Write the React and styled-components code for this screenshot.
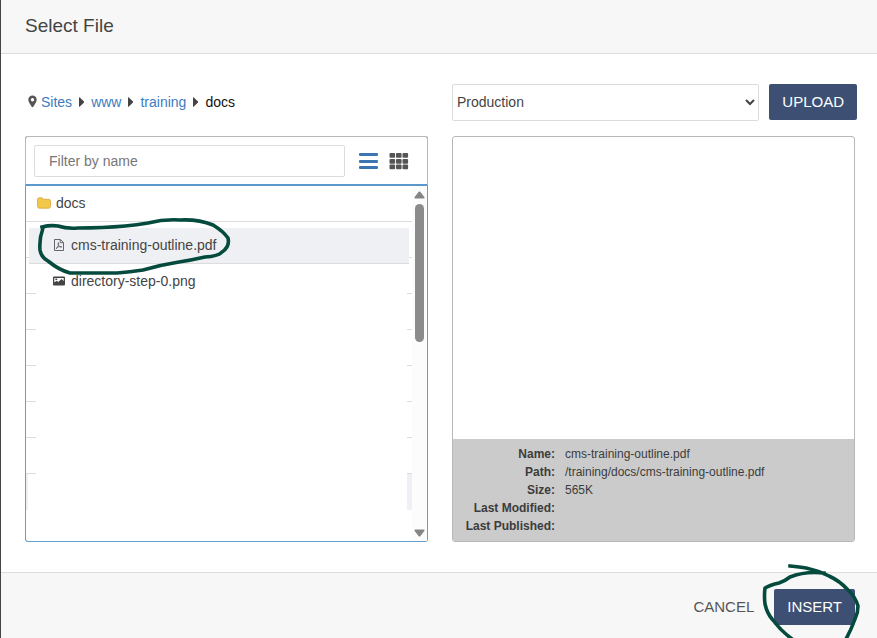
import React, { useState } from 'react';
import styled, { createGlobalStyle } from 'styled-components';

const GlobalStyle = createGlobalStyle`
  * {
    box-sizing: border-box;
  }
  body {
    margin: 0;
    background: #fff;
    color: #444;
    font-family: "Liberation Sans", Arial, sans-serif;
    font-size: 14px;
  }
  button, input, select {
    font-family: inherit;
  }
`;

const DialogStyled = styled.div`
  display: flex;
  flex-direction: column;
  min-height: 100vh;
  border-left: 1px solid #444;
`;

const HeaderStyled = styled.header`
  padding: 14px 24px 15px;
  background: #f7f7f7;
  border-bottom: 1px solid #dcdcdc;
`;

const TitleStyled = styled.h1`
  margin: 0;
  font-size: 19px;
  font-weight: normal;
  line-height: 24px;
`;

const ContentStyled = styled.main`
  flex: 1;
  display: grid;
  grid-template-columns: 1fr 1fr;
  grid-template-rows: auto 1fr;
  gap: 15px 24px;
  padding: 30px 22px 30px 24px;
`;

const BreadcrumbStyled = styled.nav`
  display: flex;
  align-items: center;
  gap: 7px;
  padding: 0 0 2px 3px;
  color: #111;
`;

const CrumbLink = styled.a`
  display: flex;
  align-items: center;
  gap: 4px;
  color: #3d7cc0;
  text-decoration: none;
`;

const ToolbarStyled = styled.div`
  display: flex;
  align-items: flex-start;
  gap: 10px;
  margin-right: -2px;
`;

const SelectStyled = styled.select`
  flex: 1;
  min-width: 0;
  height: 37px;
  padding: 0 0 2px;
  border: 1px solid #dcdcdc;
  border-radius: 2px;
  background: #fff;
  color: #444;
  font-size: 14px;
`;

const ButtonStyled = styled.button`
  height: 36px;
  padding: 0 ${(props) => (props.$primary ? '13px' : '0')} 2px;
  border: 0;
  border-radius: 2px;
  background: ${(props) => (props.$primary ? '#3d4f73' : 'transparent')};
  color: ${(props) => (props.$primary ? '#fff' : '#555')};
  font-size: 15px;
  cursor: pointer;
`;

const BrowserStyled = styled.section`
  display: flex;
  flex-direction: column;
  border: 1px solid #659dcb;
  border-top: 0;
  border-radius: 3px;
`;

const FilterBarStyled = styled.div`
  display: flex;
  align-items: center;
  gap: 10px;
  margin: 0 -1px;
  padding: 8px 18px 7px 8px;
  border: 1px solid #b8b8b8;
  border-bottom: 2px solid #5b99cc;
  border-radius: 3px 3px 0 0;
`;

const FilterInput = styled.input`
  flex: 1;
  min-width: 0;
  height: 32px;
  margin-right: 4px;
  padding: 0 14px;
  border: 1px solid #dcdcdc;
  border-radius: 2px;
  color: #444;
  font-size: 14px;
  &::placeholder {
    color: #777;
  }
`;

const ViewButton = styled.button`
  display: flex;
  padding: 0 0 1px;
  border: 0;
  background: none;
  color: ${(props) => (props.$active ? '#3b76b3' : '#555')};
  cursor: pointer;
`;

const ListAreaStyled = styled.div`
  flex: 1;
  display: flex;
`;

const StackStyled = styled.div`
  flex: 1;
  display: grid;
  align-items: start;
`;

const RuledRows = styled.div`
  grid-area: 1 / 1;
`;

const RuledRow = styled.div`
  height: 36px;
  border-bottom: 1px solid ${(props) => (props.$last ? 'transparent' : '#dcdcdc')};
  background: ${(props) => (props.$last ? 'linear-gradient(to right, #eff0f5 2px, #fff 2px, #fff 50%, #eff0f5 50%)' : '#fff')};
`;

const TreeStyled = styled.div`
  grid-area: 1 / 1;
  align-self: stretch;
  display: flex;
  flex-direction: column;
`;

const FolderRow = styled.div`
  display: flex;
  align-items: center;
  gap: 5px;
  height: 36px;
  padding: 0 11px 2px;
`;

const FileListStyled = styled.ul`
  flex: 1;
  margin: 0 5px 0 10px;
  padding: 6px 0 0;
  list-style: none;
  background: #fff;
`;

const FileRow = styled.li`
  position: relative;
  height: 36px;
  margin: 0 -2px 0 -7px;
  border-bottom: 1px solid ${(props) => (props.$selected ? '#dcdcdc' : 'transparent')};
  background: ${(props) => (props.$selected ? '#eff0f4' : 'transparent')};
`;

const FileButton = styled.button`
  display: flex;
  align-items: center;
  gap: 6px;
  width: 100%;
  height: 35px;
  padding: 0 24px 2px;
  border: 0;
  background: none;
  color: #444;
  font-size: 14px;
`;

const ScrollbarStyled = styled.div`
  display: flex;
  flex-direction: column;
  align-items: center;
  width: 15px;
  padding: 5px 0 4px;
  background: #fcfcfc;
`;

const ScrollTrack = styled.div`
  flex: 1;
  width: 9px;
  padding: 5px 0;
`;

const ScrollThumb = styled.div`
  height: 43%;
  border-radius: 5px;
  background: #8b8b8b;
`;

const PreviewStyled = styled.section`
  display: flex;
  flex-direction: column;
  justify-content: flex-end;
  border: 1px solid #b8b8b8;
  border-radius: 3px;
`;

const DetailsStyled = styled.div`
  padding: 6px 0;
  background: #cbcbcb;
`;

const DetailsTable = styled.table`
  border-collapse: collapse;
  font-size: 12px;
  line-height: 18px;
  color: #3c3c3c;
  th {
    width: 102px;
    padding: 0;
    text-align: right;
  }
  td {
    padding: 0 10px;
  }
`;

const FooterStyled = styled.footer`
  display: flex;
  justify-content: flex-end;
  gap: 20px;
  padding: 16px 22px 13px;
  background: #f7f7f7;
  border-top: 1px solid #dcdcdc;
`;

const InsertWrapper = styled.div`
  position: relative;
`;

const InkStyled = styled.svg`
  position: absolute;
  z-index: 1;
  left: ${(props) => props.$left}px;
  top: ${(props) => props.$top}px;
  fill: none;
  stroke: #044b3d;
  stroke-width: 3.6;
  stroke-linecap: square;
  stroke-linejoin: round;
  pointer-events: none;
`;

const PinIcon = () => (
  <svg width='9' height='13' viewBox='0 0 9 13'>
    <path fill='#555' fillRule='evenodd' d='M4.5 0.5A4.2 4.2 0 0 0 .3 4.7C.3 7 2.6 9.5 3.5 11.5Q4.5 13 5.5 11.5C6.4 9.5 8.7 7 8.7 4.7A4.2 4.2 0 0 0 4.5.5ZM4.5 3a1.7 1.7 0 1 1 0 3.4a1.7 1.7 0 0 1 0-3.4Z' />
  </svg>
);

const CaretIcon = () => (
  <svg width='5' height='10' viewBox='0 0 5 10'>
    <path fill='#444' d='M0 .5Q0 0 .6.3L5 4.4V5.6L.6 9.7Q0 10 0 9.5Z' />
  </svg>
);

const FolderIcon = () => (
  <svg width='14' height='12' viewBox='0 0 14 12'>
    <path fill='#f2c84b' stroke='#d9a53a' strokeWidth='.8' d='M.5 2.6Q.5.8 2.2 .8H4.6Q6 .8 6.3 2.3H11.8Q13.5 2.3 13.5 4V9.3Q13.5 11.2 11.6 11.2H2.4Q.5 11.2.5 9.3Z' />
  </svg>
);

const PdfIcon = () => (
  <svg width='12' height='13' viewBox='0 0 12 13' fill='none' stroke='#666'>
    <path d='M1.5 1.5H7.5L10.5 4.5V12.5H1.5ZM7.2 1.5V4.7H10.5' />
    <path strokeWidth='.9' d='M5.3 4.6C4.4 6.5 6.2 9 8.8 9.2M5.4 4.6C6.5 6.4 4.4 9.6 3 11M3.2 10.2C4.5 8.9 6.6 8.4 8.8 8.6' />
  </svg>
);

const ImageIcon = () => (
  <svg width='12' height='10' viewBox='0 0 12 10'>
    <path fill='#444' fillRule='evenodd' d='M1 .5H11Q12 .5 12 1.5V8.5Q12 9.5 11 9.5H1Q0 9.5 0 8.5V1.5Q0 .5 1 .5ZM1.3 2V6.4L3.6 4.7L5.3 6L8.5 3L10.7 5V2ZM2.4 2.6H4.2V4.1H2.4Z' />
  </svg>
);

const ListIcon = () => (
  <svg width='20' height='18' viewBox='0 0 20 18' fill='currentColor'>
    <rect y='1' width='19' height='3' rx='1' />
    <rect y='8' width='19' height='3' rx='1' />
    <rect y='14' width='19' height='3' rx='1' />
  </svg>
);

const GridIcon = () => (
  <svg width='20' height='18' viewBox='0 0 20 18' fill='currentColor'>
    {[1, 7, 12.5].map((y) =>
      [0.5, 7, 13.5].map((x) => (
        <rect key={`${x}-${y}`} x={x} y={y} width='5.6' height='4.8' rx='1' />
      ))
    )}
  </svg>
);

const ArrowIcon = ({ down }) => (
  <svg width='11' height='8' viewBox='0 0 11 8'>
    <path fill='#858585' d={down ? 'M1 .5H10Q11 .8 10.3 2L6.3 7.2Q5.5 8 4.7 7.2L.7 2Q0 .8 1 .5Z' : 'M1 7.5H10Q11 7.2 10.3 6L6.3 .8Q5.5 0 4.7 .8L.7 6Q0 7.2 1 7.5Z'} />
  </svg>
);

const files = [
  { name: 'cms-training-outline.pdf', icon: <PdfIcon /> },
  { name: 'directory-step-0.png', icon: <ImageIcon /> },
];

const details = [
  ['Name:', 'cms-training-outline.pdf'],
  ['Path:', '/training/docs/cms-training-outline.pdf'],
  ['Size:', '565K'],
  ['Last Modified:', ''],
  ['Last Published:', ''],
];

export default function App() {
  const [filter, setFilter] = useState('');
  const [selected, setSelected] = useState(files[0].name);
  const [view, setView] = useState('list');

  return (
    <DialogStyled>
      <GlobalStyle />
      <HeaderStyled>
        <TitleStyled>Select File</TitleStyled>
      </HeaderStyled>
      <ContentStyled>
        <BreadcrumbStyled aria-label='Breadcrumb'>
          <CrumbLink href='#sites'><PinIcon />Sites</CrumbLink>
          <CaretIcon />
          <CrumbLink href='#www'>www</CrumbLink>
          <CaretIcon />
          <CrumbLink href='#training'>training</CrumbLink>
          <CaretIcon />
          <span>docs</span>
        </BreadcrumbStyled>
        <ToolbarStyled>
          <SelectStyled aria-label='Environment'>
            <option>Production</option>
          </SelectStyled>
          <ButtonStyled type='button' $primary>UPLOAD</ButtonStyled>
        </ToolbarStyled>
        <BrowserStyled>
          <FilterBarStyled>
            <FilterInput
              aria-label='Filter by name'
              placeholder='Filter by name'
              value={filter}
              onChange={(e) => setFilter(e.target.value)}
            />
            <ViewButton type='button' aria-label='List view' $active={view === 'list'} onClick={() => setView('list')}>
              <ListIcon />
            </ViewButton>
            <ViewButton type='button' aria-label='Grid view' $active={view === 'grid'} onClick={() => setView('grid')}>
              <GridIcon />
            </ViewButton>
          </FilterBarStyled>
          <ListAreaStyled>
            <StackStyled>
              <RuledRows aria-hidden='true'>
                {[0, 1, 2, 3, 4, 5, 6, 7, 8].map((row) => <RuledRow key={row} $last={row === 8} />)}
              </RuledRows>
              <TreeStyled>
                <FolderRow><FolderIcon />docs</FolderRow>
                <FileListStyled>
                  {files.filter((file) => file.name.includes(filter)).map((file) => (
                    <FileRow key={file.name} $selected={selected === file.name}>
                      <FileButton type='button' onClick={() => setSelected(file.name)}>
                        {file.icon}
                        {file.name}
                      </FileButton>
                      {file === files[0] && (
                        <InkStyled $left={7} $top={-12} width='198' height='62' viewBox='36 216 198 62' aria-hidden='true'>
                          <path d='M42 227Q50 225 58 226Q67 229 78 228Q103 228 125 226Q137 225 148 223Q164 219 180 220Q198 219 213 225Q223 231 228 238Q230 247 222 252Q219 256 205 257Q192 260 179 262Q160 265 143 270Q130 272 117 273H70Q59 270 48 261Q41 257 40 250Q39 239 43 228' />
                        </InkStyled>
                      )}
                    </FileRow>
                  ))}
                </FileListStyled>
              </TreeStyled>
            </StackStyled>
            <ScrollbarStyled aria-hidden='true'>
              <ArrowIcon />
              <ScrollTrack><ScrollThumb /></ScrollTrack>
              <ArrowIcon down />
            </ScrollbarStyled>
          </ListAreaStyled>
        </BrowserStyled>
        <PreviewStyled>
          <DetailsStyled>
            <DetailsTable>
              <tbody>
                {details.map(([label, value]) => (
                  <tr key={label}>
                    <th scope='row'>{label}</th>
                    <td>{value}</td>
                  </tr>
                ))}
              </tbody>
            </DetailsTable>
          </DetailsStyled>
        </PreviewStyled>
      </ContentStyled>
      <FooterStyled>
        <ButtonStyled type='button'>CANCEL</ButtonStyled>
        <InsertWrapper>
          <ButtonStyled type='button' $primary>INSERT</ButtonStyled>
          <InkStyled $left={-14} $top={-27} width='102' height='76' viewBox='760 562 102 76' aria-hidden='true'>
            <path d='M790 566Q800 567 806 568Q819 571 829 576Q840 581 848 590Q855 596 858 606Q858 613 855 619Q851 630 846 639M824 573Q805 571 790 577Q785 581 779 583Q770 585 765 588Q764 596 765 604Q767 613 772 619Q781 631 792 639' />
          </InkStyled>
        </InsertWrapper>
      </FooterStyled>
    </DialogStyled>
  );
}
